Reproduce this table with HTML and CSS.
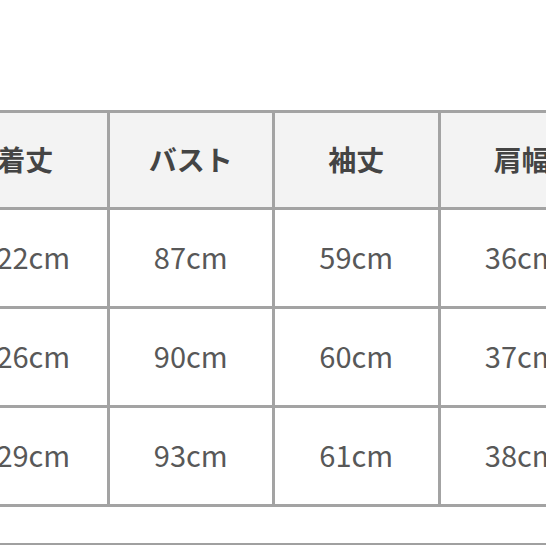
FILE: index.html
```html
<!DOCTYPE html>
<html lang="ja">
<head>
<meta charset="utf-8">
<link rel="stylesheet" href="styles.css">
</head>
<body>
<div class="page">
  <table class="size-table">
    <colgroup>
      <col class="c"><col class="c"><col class="c"><col class="c">
    </colgroup>
    <thead>
      <tr class="head">
        <th>着丈</th><th>バスト</th><th>袖丈</th><th>肩幅</th>
      </tr>
    </thead>
    <tbody>
      <tr><td>122cm</td><td>87cm</td><td>59cm</td><td>36cm</td></tr>
      <tr><td>126cm</td><td>90cm</td><td>60cm</td><td>37cm</td></tr>
      <tr><td>129cm</td><td>93cm</td><td>61cm</td><td>38cm</td></tr>
    </tbody>
  </table>
  <div class="rule"></div>
</div>
</body>
</html>
```
FILE: styles.css
```css
html, body {
  margin: 0;
  padding: 0;
  background: #ffffff;
  overflow: hidden;
}
.page {
  width: 546px;
  height: 546px;
  overflow: hidden;
  padding-top: 110px;
  box-sizing: border-box;
}
.size-table {
  border-collapse: collapse;
  table-layout: fixed;
  width: 665px;
  margin-left: -59px;
  font-family: "Noto Sans CJK JP", sans-serif;
  font-size: 28px;
}
.size-table .c {
  width: 165.5px;
}
.size-table th,
.size-table td {
  border: 3px solid #a3a3a3;
  text-align: center;
  padding: 0;
  white-space: nowrap;
  overflow: hidden;
}
.size-table th {
  height: 91px;
  padding-bottom: 3px;
  background: #f3f3f3;
  color: #444444;
  font-weight: 700;
}
.size-table td {
  height: 91px;
  padding-bottom: 5px;
  color: #585858;
  font-weight: 400;
  font-size: 29px;
}
.rule {
  margin-top: 36px;
  height: 2px;
  background: #a0a0a0;
}
```
